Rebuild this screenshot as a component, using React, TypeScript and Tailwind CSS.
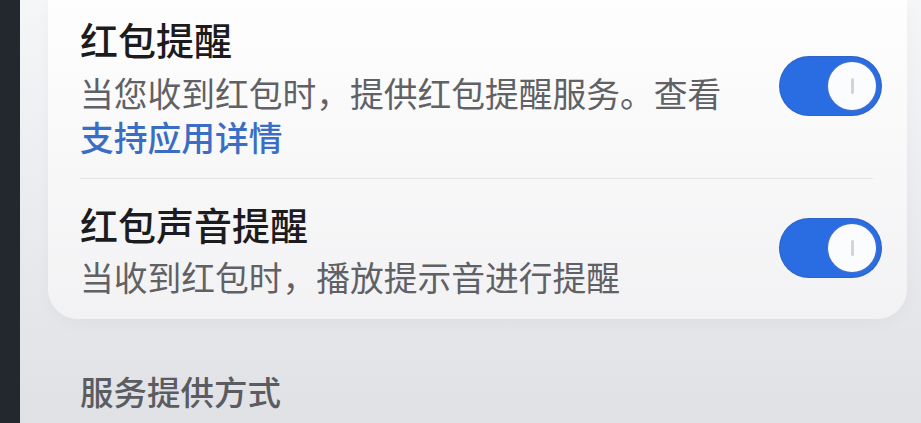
import React from "react";

const font = { fontFamily: '"Noto Sans CJK SC", "Noto Sans", sans-serif' };

function Toggle() {
  return (
    <div className="-mt-2 flex h-[58px] w-[101px] shrink-0 items-center justify-end rounded-full bg-[#2a6ce2] pr-[5px] ring-1 ring-[#2f63c6]">
      <div className="flex h-[48px] w-[48px] items-center justify-center rounded-full bg-[#fbfcfd] ring-[1.5px] ring-[#3a70d0]">
        <div className="h-[16px] w-[3px] rounded-full bg-[#d2d4d8]" />
      </div>
    </div>
  );
}

export default function App() {
  return (
    <div className="flex h-[423px] w-full overflow-hidden" style={font}>
      <div className="w-[20px] shrink-0 bg-[#23272e]" />
      <div className="flex flex-1 flex-col bg-gradient-to-b from-[#f5f6f8] to-[#e0e1e5] pl-[28px] pr-[14px]">
        <div className="rounded-b-[30px] bg-gradient-to-b from-[#fefefe] to-[#f2f2f4] pt-[20px] pb-[20px] shadow-[0_6px_16px_rgba(0,0,0,0.03)]">
          <div className="flex items-center justify-between pl-[32px] pr-[26px] pb-[19px]">
            <div className="w-[660px]">
              <div className="text-[38px] leading-[38px] font-medium text-[#1c1c1e]">红包提醒</div>
              <div className="mt-[13px] text-[33.75px] leading-[44px] text-[#5f6165]">
                当您收到红包时，提供红包提醒服务。查看
              </div>
              <div className="text-[33.75px] leading-[44px] font-medium text-[#3a6ec4]">支持应用详情</div>
            </div>
            <Toggle />
          </div>
          <div className="ml-[32px] mr-[34px] h-px bg-[#e4e5e7]" />
          <div className="flex items-center justify-between pl-[32px] pr-[26px] pt-[26px]">
            <div className="w-[660px]">
              <div className="text-[38px] leading-[38px] font-medium text-[#1c1c1e]">红包声音提醒</div>
              <div className="mt-[12px] text-[33.75px] leading-[44px] text-[#5f6165]">
                当收到红包时，播放提示音进行提醒
              </div>
            </div>
            <Toggle />
          </div>
        </div>
        <div className="mt-[52px] pl-[32px] text-[33.5px] leading-[40px] font-medium text-[#5a5c61]">
          服务提供方式
        </div>
      </div>
    </div>
  );
}
